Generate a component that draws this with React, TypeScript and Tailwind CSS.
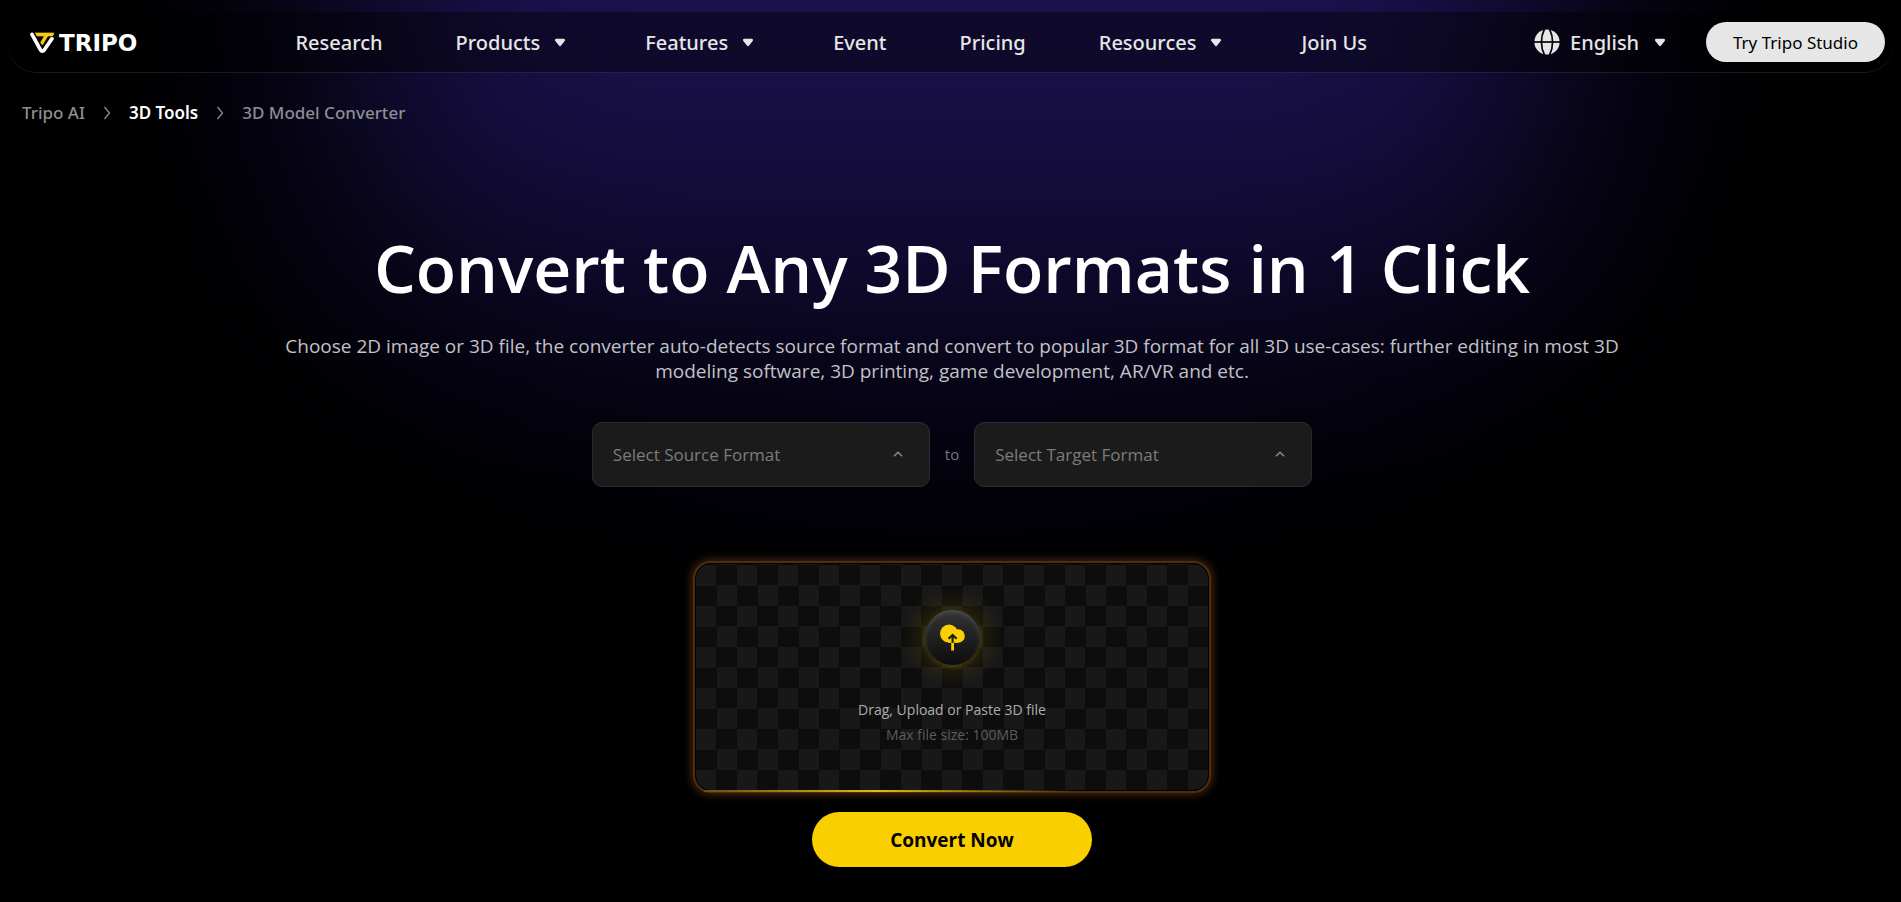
import type { ReactNode } from "react";

interface NavItem {
  label: string;
  hasMenu?: boolean;
}

const navItems: NavItem[] = [
  { label: "Research" },
  { label: "Products", hasMenu: true },
  { label: "Features", hasMenu: true },
  { label: "Event" },
  { label: "Pricing" },
  { label: "Resources", hasMenu: true },
  { label: "Join Us" },
];

function Caret() {
  return (
    <svg width="24" height="24" viewBox="0 0 24 24" fill="currentColor" aria-hidden="true">
      <path d="M8.2 7.8h7.6c1.1 0 1.6 1.2.9 2.1l-3.6 4.7c-.6.8-1.6.8-2.2 0L7.3 9.9c-.7-.9-.2-2.1.9-2.1z" />
    </svg>
  );
}

function Globe() {
  return (
    <svg width="26" height="26" viewBox="0 0 26 26" aria-hidden="true">
      <circle cx="13" cy="13" r="12.6" fill="#e6e6e6" />
      <g fill="none" stroke="#050409" strokeWidth="1.7">
        <path d="M0 13h26" />
        <path d="M10.5 0C6.4 8 6.4 18 10.5 26" />
        <path d="M15.5 0c4.1 8 4.1 18 0 26" />
      </g>
    </svg>
  );
}

function Logo() {
  return (
    <a href="#" className="flex items-center gap-1 pt-0.5 text-white">
      <svg width="25" height="22" viewBox="0 0 75 66" aria-hidden="true">
        <path
          d="M6 7 31 53q6 9 12 0L66 20"
          fill="none"
          stroke="#fff"
          strokeWidth="11"
          strokeLinecap="round"
          strokeLinejoin="round"
        />
        <path
          d="M13 1h57q5 0 3 5l-4 8H54L40 38q-3 4-6 0l-4-7 10-17H20z"
          fill="#f5cc13"
          stroke="#000"
          strokeWidth="2"
        />
      </svg>
      <span className="font-['DejaVu_Sans',sans-serif] text-[23px] font-bold leading-7">
        TRIPO
      </span>
    </a>
  );
}

function FormatSelect({ label }: { label: string }) {
  return (
    <div className="relative">
      <select
        aria-label={label}
        className="h-[65px] w-[338px] appearance-none rounded-[10px] border border-[#2b2b2b] bg-[#1b1b1b] px-5 text-[17px] text-[#7c7c7c]"
      >
        <option>{label}</option>
      </select>
      <svg
        className="pointer-events-none absolute right-6 top-6 text-[#8a8a8a]"
        width="16"
        height="16"
        viewBox="0 0 16 16"
        fill="none"
        stroke="currentColor"
        strokeWidth="1.5"
        aria-hidden="true"
      >
        <path d="m4 10.2 4-4 4 4" />
      </svg>
    </div>
  );
}

function Crumb({ children }: { children: ReactNode }) {
  return (
    <li className="flex items-center gap-[15px]">
      <svg width="14" height="14" viewBox="0 0 14 14" fill="none" stroke="#8d8d93" strokeWidth="1.3" aria-hidden="true">
        <path d="m4.5 1 5 6-5 6" />
      </svg>
      {children}
    </li>
  );
}

function UploadIcon() {
  return (
    <span className="flex size-[55px] items-center justify-center rounded-full bg-linear-to-b from-[#353535] to-[#0d0d0d] shadow-[0_0_24px_6px_rgba(190,160,0,0.22),0_2px_5px_0_rgba(200,165,0,0.2),inset_0_2px_4px_rgba(255,255,255,0.15)]">
      <svg width="27" height="27" viewBox="0 0 27 27" aria-hidden="true">
        <g fill="#fccf03">
          <circle cx="10" cy="9.6" r="9" />
          <circle cx="19" cy="12" r="6.8" />
          <path d="M9 10h10v8.8H9z" />
          <path d="M12.2 18h2.8v8.5h-2.8z" />
        </g>
        <path d="m9.6 14.8 4-3.8 4 3.8" fill="none" stroke="#1a1a1a" strokeWidth="2.2" />
        <path d="M13.6 18.8V12" stroke="#1a1a1a" strokeWidth="2.2" />
      </svg>
    </span>
  );
}

export default function App() {
  return (
    <div className="relative isolate min-h-screen overflow-hidden bg-black px-2 pt-3 font-['Noto_Sans',sans-serif]">
      {/* Purple glow behind the hero */}
      <div className="absolute inset-x-0 top-0 -z-10 h-[640px] bg-[radial-gradient(ellipse_45%_100%_at_50%_0%,#0a0720_0%,#080519_40%,#03020a_75%,transparent_100%)]" />
      <div className="absolute inset-x-0 -top-[400px] -z-10 mx-auto h-[680px] w-[60%] rounded-b-[80px] bg-linear-to-b from-[#1d1352] from-58% to-[#110b34] blur-[120px]" />

      <header className="flex h-[61px] items-center rounded-[28px] border-b border-white/10 bg-black/40 pl-[22px] pr-2 text-xl font-medium text-[#e6e6e6]">
        <Logo />
        <nav className="ml-[158px] flex items-center gap-[73px] pt-0.5">
          {navItems.map((item) =>
            item.hasMenu ? (
              <button key={item.label} className="flex items-center gap-2" aria-haspopup="menu">
                {item.label}
                <Caret />
              </button>
            ) : (
              <a key={item.label} href="#">
                {item.label}
              </a>
            )
          )}
        </nav>
        <div className="ml-auto flex items-center">
          <label htmlFor="language" className="mr-2.5">
            <Globe />
          </label>
          <div className="flex items-center gap-2 pt-0.5">
            <select id="language" aria-label="Language" className="appearance-none bg-transparent">
              <option>English</option>
            </select>
            <Caret />
          </div>
          <a
            href="#"
            className="ml-[34px] flex h-10 w-[179px] items-center justify-center rounded-full bg-[#e6e6e6] pt-0.5 text-[17px] font-normal text-black"
          >
            Try Tripo Studio
          </a>
        </div>
      </header>

      <nav aria-label="Breadcrumb" className="mt-7 px-3.5">
        <ol className="flex items-center gap-[15px] text-[17px] font-medium leading-6 text-[#8d8d93]">
          <li>
            <a href="#">Tripo AI</a>
          </li>
          <Crumb>
            <a href="#" className="font-semibold text-white">
              3D Tools
            </a>
          </Crumb>
          <Crumb>
            <span>3D Model Converter</span>
          </Crumb>
        </ol>
      </nav>

      <main className="flex flex-col items-center pl-[3px] font-['Open_Sans','Noto_Sans',sans-serif]">
        <h1 className="mt-[98px] text-[66px] font-semibold leading-[88px] text-white">
          Convert to Any 3D Formats in 1 Click
        </h1>
        <p className="mt-[23px] max-w-[1380px] text-center text-[19px] leading-[25px] text-[#c2c2c6]">
          Choose 2D image or 3D file, the converter auto-detects source format and convert to
          popular 3D format for all 3D use-cases: further editing in most 3D modeling software, 3D
          printing, game development, AR/VR and etc.
        </p>

        <div className="mt-[38px] flex items-center gap-[15px]">
          <FormatSelect label="Select Source Format" />
          <span className="text-[15px] text-[#77777a]">to</span>
          <FormatSelect label="Select Target Format" />
        </div>

        <label className="relative mt-[76px] flex h-[228px] w-[514px] cursor-pointer flex-col items-center rounded-2xl border border-black bg-[conic-gradient(#0d0d0d_25%,#181818_0_50%,#0d0d0d_0_75%,#181818_0)] bg-[length:41px_41px] bg-[position:0_1px] pt-[46px] shadow-[0_0_0_2px_#4e2d11,0_0_8px_4px_rgba(120,66,20,0.55)]">
          <input type="file" className="sr-only" />
          <UploadIcon />
          <span className="mt-8 text-sm leading-[25px] text-[#adadad]">
            Drag, Upload or Paste 3D file
          </span>
          <span className="text-sm leading-[25px] text-[#5c5c5c]">Max file size: 100MB</span>
          <span className="absolute inset-x-2 -bottom-0.5 h-0.5 bg-linear-to-r from-[#6e4d12] via-[#e3bd12] via-35% to-transparent to-75%" />
        </label>

        <button className="mt-[21px] h-[55px] w-[280px] rounded-full bg-[#f9cf00] pt-0.5 text-[19px] font-bold text-black">
          Convert Now
        </button>
      </main>
    </div>
  );
}
